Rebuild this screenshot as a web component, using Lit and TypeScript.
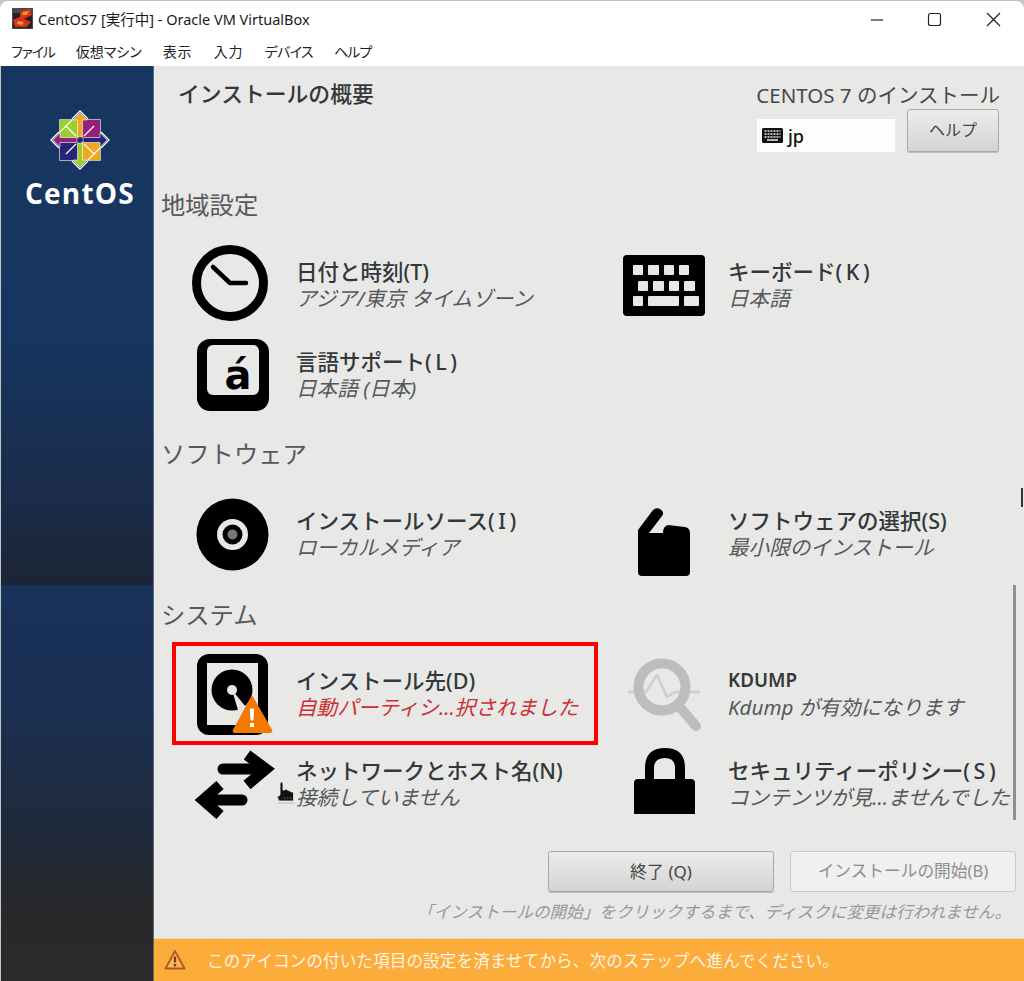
import { LitElement, html, svg, css } from "lit";
import { customElement } from "lit/decorators.js";

const clock = svg`
  <circle cx="230" cy="283" r="33.5" fill="none" stroke="#000" stroke-width="9"/>
  <path d="M213 267 L230 283 L246 283" fill="none" stroke="#000" stroke-width="4.5" stroke-linecap="round" stroke-linejoin="round"/>`;

const keyRects: number[][] = [
  [633, 265, 10], [648, 265, 11], [664, 265, 10], [679, 265, 10],
  [638, 281, 10], [653, 281, 11], [669, 281, 10], [684, 281, 11],
  [633, 296, 10], [648, 296, 31], [684, 296, 15],
];
const keyboard = svg`
  <rect x="623" y="255" width="82" height="61" rx="4" fill="#000"/>
  ${keyRects.map(([x, y, w]) => svg`<rect x=${x} y=${y} width=${w} height="10" rx="1" fill="#e8e8e7"/>`)}`;

const language = svg`
  <rect x="197" y="339" width="72" height="72" rx="13" fill="#000"/>
  <rect x="207" y="345" width="52" height="50" rx="6" fill="#e8e8e7"/>
  <text x="238" y="389" text-anchor="middle" font-family="DejaVu Sans, sans-serif" font-weight="700" font-size="40" fill="#000">á</text>`;

const disc = svg`
  <circle cx="232.5" cy="534.5" r="36" fill="#000"/>
  <circle cx="232.5" cy="534.5" r="15.5" fill="#e8e8e7"/>
  <circle cx="232.5" cy="534.5" r="10" fill="#000"/>
  <circle cx="232.5" cy="534.5" r="5" fill="#777"/>`;

const software = svg`
  <path d="M638 530 L653 510 Q656 507 660 509 Q665 512 662 516 L649 533 L663 533 Q663 526 668 525 L685 527 Q690 528 690 533 L690 572 Q690 576 686 576 L642 576 Q638 576 638 572 Z" fill="#000"/>`;

const harddisk = svg`
  <rect x="197" y="654" width="71" height="81" rx="12" fill="#000"/>
  <rect x="207" y="663" width="51" height="62" fill="#e8e8e7"/>
  <circle cx="232" cy="690" r="20.5" fill="#000"/>
  <path d="M232 690 L250 712 L241 720 Z" fill="#e8e8e7"/>
  <circle cx="232" cy="690" r="5" fill="#e8e8e7"/>
  <path d="M252 697 L271 730 Q272 732 270 732 L235 732 Q233 732 234 730 Z" fill="#f57900" stroke="#f57900" stroke-width="2" stroke-linejoin="round"/>
  <path d="M250.4 709 L253.6 709 L253 720 L251 720 Z" fill="#fff" stroke="#fff" stroke-width="1" stroke-linejoin="round"/>
  <rect x="250" y="723" width="4" height="4" fill="#fff"/>`;

const kdump = svg`
  <path d="M628 692 L646 692 L657 675 L667 697 L675 692 L700 692" fill="none" stroke="#d0d0d0" stroke-width="3" stroke-linejoin="round"/>
  <circle cx="662" cy="687" r="23.5" fill="none" stroke="#bdbdbd" stroke-width="10"/>
  <path d="M678 705 L696 726" stroke="#bdbdbd" stroke-width="10" stroke-linecap="round"/>`;

const arrows = svg`
  <path d="M223 768 L264 768" fill="none" stroke="#000" stroke-width="11" stroke-linecap="round"/>
  <path d="M247 754 L266 768 L247 784" fill="none" stroke="#000" stroke-width="11" stroke-linejoin="miter"/>
  <path d="M242 799 L204 799" fill="none" stroke="#000" stroke-width="11" stroke-linecap="round"/>
  <path d="M220 784 L203 799 L220 814" fill="none" stroke="#000" stroke-width="11" stroke-linejoin="miter"/>`;

const lock = svg`
  <path fill-rule="evenodd" d="M645 779 L645 768 Q645 748 665 748 Q685 748 685 768 L685 779 L691 779 Q695 779 695 783 L695 814 L634 814 L634 783 Q634 779 638 779 Z M654 779 L675 779 L675 768 Q675 758 665 758 Q654 758 654 768 Z" fill="#000"/>`;

type Spoke = { title: string; sub: string; icon: unknown; x: number; y: number; warn?: boolean; latin?: boolean };
type Section = { heading: string; spokes: Spoke[] };

const C1 = 161;
const C2 = 593;
const sections: Section[] = [
  {
    heading: "地域設定",
    spokes: [
      { title: "日付と時刻(T)", sub: "アジア/東京 タイムゾーン", icon: clock, x: C1, y: 240 },
      { title: "キーボード(\u2009K\u2009)", sub: "日本語", icon: keyboard, x: C2, y: 240 },
      { title: "言語サポート(\u2009L\u2009)", sub: "日本語 (日本)", icon: language, x: C1, y: 330 },
    ],
  },
  {
    heading: "ソフトウェア",
    spokes: [
      { title: "インストールソース(\u2009I\u2009)", sub: "ローカルメディア", icon: disc, x: C1, y: 489 },
      { title: "ソフトウェアの選択(S)", sub: "最小限のインストール", icon: software, x: C2, y: 489 },
    ],
  },
  {
    heading: "システム",
    spokes: [
      { title: "インストール先(D)", sub: "自動パーティシ...択されました", icon: harddisk, x: C1, y: 649, warn: true },
      { title: "KDUMP", sub: "Kdump が有効になります", icon: kdump, x: C2, y: 649, latin: true },
      { title: "ネットワークとホスト名(N)", sub: "接続していません", icon: arrows, x: C1, y: 738 },
      { title: "セキュリティーポリシー(\u2009S\u2009)", sub: "コンテンツが見...ませんでした", icon: lock, x: C2, y: 739 },
    ],
  },
];

const menu = ["ファイル", "仮想マシン", "表示", "入力", "デバイス", "ヘルプ"];

@customElement("app-root")
export class AppRoot extends LitElement {
  static styles = css`
    :host {
      display: block;
      position: relative;
      width: 1024px;
      height: 981px;
      overflow: hidden;
      background: #c4c4c4;
      font-family: "Noto Sans", "Noto Sans CJK JP", sans-serif;
    }
    .window { display: flex; flex-direction: column; height: 981px; }
    .titlebar {
      display: flex; align-items: center; height: 35px; margin-top: 1px;
      background: #fff; border-radius: 8px 8px 0 0; padding-left: 12px;
      font-size: 14.5px; color: #1a1a1a;
    }
    .vbox { width: 21px; height: 21px; margin-right: 5px; }
    .title-text { flex: 1; }
    .winbtns { display: flex; }
    .winbtns svg { display: block; width: 57px; height: 35px; }
    .menubar {
      display: flex; align-items: center; gap: 21px; height: 30px;
      background: #fff; padding-left: 11px; font-size: 14px; color: #222;
      font-feature-settings: "palt";
    }
    .menubar span:first-child { letter-spacing: -1.2px; }
    .menubar span:nth-child(3), .menubar span:nth-child(4) { letter-spacing: 1px; }
    .menubar span:nth-child(5) { letter-spacing: -0.6px; }
    .menubar span:nth-child(6) { letter-spacing: -1px; }
    .body { flex: 1; display: flex; min-height: 0; }
    .side {
      width: 153px; box-sizing: border-box; margin-left: 1px; padding-left: 6px;
      display: flex; flex-direction: column; align-items: center;
      background: linear-gradient(180deg, #17365f 0, #163560 270px, #1a2c4a 430px, #1c2535 519px, #19325a 519px, #1a2f52 640px, #1f2a3a 770px, #292929 850px, #2a2a2a 915px);
      border-right: 1px solid #5b6b80;
      color: #fff;
    }
    .logo { width: 60px; height: 60px; margin-top: 44px; display: block; }
    .brand {
      font-family: "Open Sans", sans-serif; font-weight: 700; font-size: 28px; line-height: 34px;
      letter-spacing: 1.2px; margin-top: 6px;
    }
    .main { flex: 1; display: flex; flex-direction: column; background: #e8e8e7; min-width: 0; }
    .content { flex: 1; padding-left: 7px; }
    .header { display: flex; justify-content: space-between; height: 124px; padding-right: 25px; }
    .page-title { margin: 15px 0 0 17px; font-size: 21.8px; line-height: 26px; font-weight: 500; color: #33383a; }
    .head-right { display: flex; flex-direction: column; align-items: flex-end; }
    .product { margin: 16px -1px 0 0; font-size: 20.5px; line-height: 26px; color: #44494b; }
    .head-controls { display: flex; align-items: flex-end; gap: 12px; margin-top: 1px; }
    .layout {
      display: flex; align-items: center; gap: 5px; width: 138px; height: 33px; padding-left: 5px; box-sizing: border-box;
      background: #fdfdfd; font-size: 18px; color: #111; font-weight: 500;
    }
    .layout svg { width: 21px; height: 15px; }
    button {
      font: inherit; color: #444; cursor: default;
      border: 1px solid #a8a8a6; border-radius: 3px;
      background: linear-gradient(180deg, #ececeb, #d4d4d3);
      box-shadow: 0 1px 0 #bbb; display: block; padding: 0 0 3px;
    }
    .help { width: 92px; height: 43px; font-size: 16px; }
    .section + .section { margin-top: 19px; }
    .section:nth-child(4) { margin-top: 21px; }
    .section h2 { margin: 0 0 20px; font-size: 24.3px; line-height: 30px; font-weight: 400; color: #55595b; }
    .section:nth-child(4) h2 { margin-bottom: 19px; }
    .grid { display: grid; grid-template-columns: 432px 1fr; grid-auto-rows: 90px; }
    .spoke { display: flex; align-items: center; min-width: 0; }
    .spoke svg { width: 135px; height: 90px; overflow: visible; flex: none; }
    .text { display: flex; flex-direction: column; white-space: nowrap; }
    .t { font-size: 21.5px; line-height: 27px; font-weight: 500; color: #33383a; }
    .t.latin { font-size: 18.8px; font-weight: 600; }
    .s { font-size: 20.6px; line-height: 27px; font-style: italic; color: #55595b; }
    .s.warn { color: #cc2f33; }
    .actions { display: flex; justify-content: flex-end; gap: 16px; padding-right: 8px; margin-top: 22px; }
    .actions button { width: 226px; height: 41px; font-size: 17px; }
    .actions button.off { width: 226px; font-size: 16.7px; background: #f0f0ef; border-color: #c8c8c7; color: #8d8f8f; box-shadow: none; }
    .note { text-align: right; padding-right: 13px; margin-top: 8px; font-size: 16.6px; line-height: 24px; font-style: italic; color: #979999; }
    .warnbar {
      display: flex; align-items: center; height: 43px; padding-left: 10px; gap: 21px;
      background: #fcac3a; border-top: 1px solid #f1d8ae; box-sizing: border-box; color: #fdf3e2; font-size: 16.7px;
    }
    .warnbar svg { width: 22px; height: 22px; flex: none; }
    .mark { position: absolute; left: 172px; top: 642px; width: 426px; height: 103px; box-sizing: border-box; border: 4px solid #f00; }
    .scroll { position: absolute; left: 1013px; top: 585px; width: 3px; height: 235px; background: #8d8f90; }
    .edge { position: absolute; left: 1021px; top: 488px; width: 2px; height: 19px; background: #333; }
    .cursor { position: absolute; left: 276px; top: 781px; width: 20px; height: 24px; }
  `;

  private renderSpoke(s: Spoke) {
    return html`<div class="spoke">
      <svg viewBox="${s.x} ${s.y} 135 90" aria-hidden="true">${s.icon}</svg>
      <div class="text">
        <span class="t ${s.latin ? "latin" : ""}">${s.title}</span>
        <span class="s ${s.warn ? "warn" : ""}">${s.sub}</span>
      </div>
    </div>`;
  }

  render() {
    return html`
      <div class="window">
        <div class="titlebar">
          <svg class="vbox" viewBox="0 0 21 21">
            <rect width="21" height="21" fill="#4a4a4a"/>
            <rect x="1" y="5" width="19" height="15" fill="#2b2020"/>
            <path d="M8 3 L18 1 L20 7 L12 11 L19 14 L14 19 L3 19 L1 12 L8 9 Z" fill="#d8301c"/>
            <path d="M11 4 L17 3 L15 7 L10 7 Z M6 13 L12 14 L10 17 L5 16 Z" fill="#f29a2e"/>
          </svg>
          <span class="title-text">CentOS7 [実行中] - Oracle VM VirtualBox</span>
          <div class="winbtns">
            <svg viewBox="0 0 57 35"><path d="M18 19 H30" stroke="#222" stroke-width="1.2"/></svg>
            <svg viewBox="0 0 57 35"><rect x="18.5" y="12.5" width="12" height="12" rx="2" fill="none" stroke="#222" stroke-width="1.2"/></svg>
            <svg viewBox="0 0 57 35"><path d="M20 12 L33 25 M33 12 L20 25" stroke="#222" stroke-width="1.2"/></svg>
          </div>
        </div>
        <div class="menubar">${menu.map((m) => html`<span>${m}</span>`)}</div>
        <div class="body">
          <aside class="side">
            <svg class="logo" viewBox="-30 -30 60 60">
              <rect x="-20.5" y="-20.5" width="19" height="19" fill="#9ccd2a"/>
              <rect x="1.5" y="-20.5" width="19" height="19" fill="#932279"/>
              <rect x="1.5" y="1.5" width="19" height="19" fill="#efa724"/>
              <rect x="-20.5" y="1.5" width="19" height="19" fill="#262577"/>
              <path d="M-20.5 -20.5 H20.5 V20.5 H-20.5 Z" fill="none" stroke="#c9cdd2" stroke-width="0.8"/>
              <path d="M-8 -21 L0 -29 L8 -21 M21 -8 L29 0 L21 8 M8 21 L0 29 L-8 21 M-21 8 L-29 0 L-21 -8" fill="none" stroke="#fff" stroke-width="1.4"/>
              <path d="M-14 -14 L-4 -4 M14 -14 L4 -4 M14 14 L4 4 M-14 14 L-4 4 M-14 -14 L-8 -20 M-14 -14 L-20 -8 M14 14 L8 20 M14 14 L20 8" stroke="#fff" stroke-width="1.2" fill="none"/>
              <path d="M0 -27 L7 -20 H2.5 V-3 H-2.5 V-20 H-7 Z" fill="#efa724" stroke="#fff" stroke-width="0.6"/>
              <path d="M27 0 L20 7 V2.5 H3 V-2.5 H20 V-7 Z" fill="#262577" stroke="#fff" stroke-width="0.6"/>
              <path d="M0 27 L-7 20 H-2.5 V3 H2.5 V20 H7 Z" fill="#9ccd2a" stroke="#fff" stroke-width="0.6"/>
              <path d="M-27 0 L-20 -7 V-2.5 H-3 V2.5 H-20 V7 Z" fill="#932279" stroke="#fff" stroke-width="0.6"/>
              <path d="M0 -3 L3 0 L0 3 L-3 0 Z" fill="#262577"/>
            </svg>
            <div class="brand">CentOS</div>
          </aside>
          <main class="main">
            <div class="content">
              <div class="header">
                <div class="page-title">インストールの概要</div>
                <div class="head-right">
                  <div class="product">CENTOS 7 のインストール</div>
                  <div class="head-controls">
                    <div class="layout">
                      <svg viewBox="0 0 21 15">
                        <rect width="21" height="15" rx="1.5" fill="#111"/>
                        <path d="M2.5 3 H18.5 M2.5 6 H18.5 M2.5 9 H18.5" stroke="#eee" stroke-width="1.3" stroke-dasharray="2 1"/>
                        <path d="M5 12 H16" stroke="#eee" stroke-width="1.5"/>
                      </svg>
                      <span>jp</span>
                    </div>
                    <button class="help">ヘルプ</button>
                  </div>
                </div>
              </div>
              ${sections.map(
                (sec) => html`<section class="section">
                  <h2>${sec.heading}</h2>
                  <div class="grid">${sec.spokes.map((s) => this.renderSpoke(s))}</div>
                </section>`
              )}
              <div class="actions">
                <button>終了 (Q)</button>
                <button class="off">インストールの開始(B)</button>
              </div>
              <div class="note">「インストールの開始」をクリックするまで、ディスクに変更は行われません。</div>
            </div>
            <div class="warnbar">
              <svg viewBox="0 0 22 22">
                <path d="M11 2 L20.5 19.5 H1.5 Z" fill="#f8b45e" stroke="#b4581c" stroke-width="1.8" stroke-linejoin="round"/>
                <path d="M11 7.5 V13.5" stroke="#7a3a12" stroke-width="2.2"/>
                <rect x="9.8" y="15" width="2.4" height="2.4" fill="#7a3a12"/>
              </svg>
              <span>このアイコンの付いた項目の設定を済ませてから、次のステップへ進んでください。</span>
            </div>
          </main>
        </div>
      </div>
      <div class="scroll"></div>
      <div class="edge"></div>
      <div class="mark"></div>
      <svg class="cursor" viewBox="0 0 20 24">
        <path d="M4 14 V3 Q4 1 5.5 1 Q7 1 7 3 V9 H9 V8 H11 V9 H13 V10 H15 V11 H17.5 V20 H3 L1 16 Z" fill="#111" stroke="#eee" stroke-width="0.8"/>
        <path d="M2 21.5 H18.5 V22.5 H2 Z" fill="#bbb"/>
        <path d="M8 17 h1.5 M11 17 h1.5 M14 17 h1.5" stroke="#777" stroke-width="1"/>
      </svg>
    `;
  }
}
